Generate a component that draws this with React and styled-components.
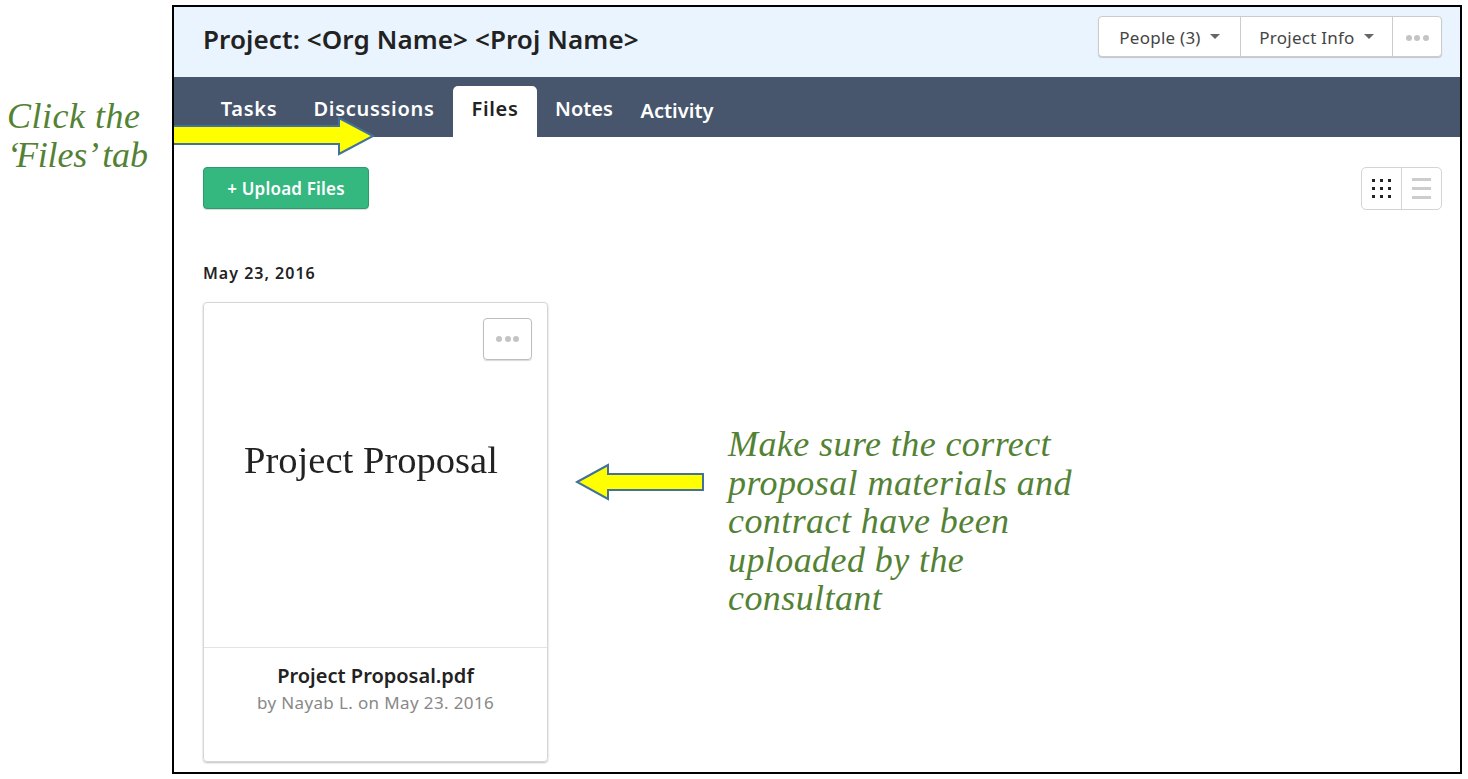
import React from 'react'
import styled, { createGlobalStyle } from 'styled-components'

const Global = createGlobalStyle`
    html, body {
        margin: 0;
        background: #fff;
        overflow: hidden;
    }
    body {
        font-family: "Noto Sans", "Open Sans", sans-serif;
        color: #222;
    }
`

const Page = styled.div`
    display: flex;
    height: 779px;
    padding-top: 5px;
    box-sizing: border-box;
`

const Gutter = styled.aside`
    width: 172px;
    flex: none;
    padding: 92px 0 0 7px;
    box-sizing: border-box;
`

const Note = styled.p`
    margin: 0;
    font-family: "Liberation Serif", serif;
    font-style: italic;
    font-size: 36px;
    line-height: 38.5px;
    letter-spacing: 0.5px;
    color: #548235;
`

const NoteLine = styled.span`
    letter-spacing: -0.2px;
`

const TightQuote = styled.span`
    letter-spacing: ${p => p.$ls}px;
`

const Frame = styled.main`
    position: relative;
    width: 1290px;
    height: 769px;
    box-sizing: border-box;
    border: 2px solid #000;
    overflow: hidden;
`

const Header = styled.header`
    height: 70px;
    background: #e9f4ff;
    display: flex;
    align-items: flex-start;
    justify-content: space-between;
    padding: 9px 18px 0 29px;
    box-sizing: border-box;
`

const Title = styled.h1`
    margin: 0;
    font-size: 26px;
    line-height: 46px;
    font-weight: 600;
    letter-spacing: 0.1px;
    color: #222;
`

const BtnGroup = styled.div`
    display: flex;
    height: 41px;
    box-sizing: border-box;
    background: #fff;
    border: 1px solid #ccc;
    border-radius: 4px;
    box-shadow: 0 1px 1px rgba(0, 0, 0, 0.18);
`

const GroupBtn = styled.div`
    width: ${p => p.$w}px;
    display: flex;
    align-items: center;
    justify-content: center;
    gap: 9px;
    padding-top: 2px;
    font-size: 17px;
    color: #444;
    letter-spacing: 0.25px;
    box-sizing: border-box;
    border-right: ${p => (p.$last ? 'none' : '1px solid #ccc')};
`

const Caret = styled.span`
    width: 0;
    height: 0;
    margin-bottom: 2px;
    border-left: 5px solid transparent;
    border-right: 5px solid transparent;
    border-top: 5px solid #666;
`

const Dots = styled.span`
    display: flex;
    gap: 2.5px;
    i {
        width: 6px;
        height: 6px;
        border-radius: 50%;
        background: #c4c4c4;
    }
`

const Nav = styled.nav`
    height: 60px;
    background: #47566c;
    display: flex;
    align-items: flex-end;
    padding-left: 29px;
`

const Tab = styled.div`
    height: ${p => (p.$active ? 51 : 60)}px;
    width: ${p => p.$w}px;
    display: flex;
    justify-content: center;
    align-items: flex-start;
    box-sizing: border-box;
    padding-top: ${p => p.$top}px;
    font-size: 20px;
    line-height: 28px;
    font-weight: 600;
    letter-spacing: ${p => p.$ls || 0}px;
    color: ${p => (p.$active ? '#222' : '#fff')};
    background: ${p => (p.$active ? '#fff' : 'transparent')};
    border-radius: ${p => (p.$active ? '5px 5px 0 0' : '0')};
`

const Content = styled.section`
    padding: 30px 18px 0 29px;
`

const Toolbar = styled.div`
    display: flex;
    justify-content: space-between;
    align-items: flex-start;
`

const UploadBtn = styled.button`
    width: 166px;
    height: 42px;
    padding: 0;
    background: #35b87f;
    border: 1px solid #2a9c6b;
    border-radius: 4px;
    box-shadow: 0 1px 1px rgba(0, 0, 0, 0.15);
    color: #fff;
    font-family: inherit;
    font-size: 17px;
    font-weight: 600;
    letter-spacing: 0.2px;
`

const ViewToggle = styled.div`
    display: flex;
    width: 81px;
    height: 43px;
    box-sizing: border-box;
    border: 1px solid #d4d4d4;
    border-radius: 5px;
`

const ViewBtn = styled.div`
    flex: ${p => (p.$grow ? 1 : 'none')};
    width: ${p => (p.$grow ? 'auto' : '40px')};
    display: flex;
    align-items: center;
    justify-content: center;
    box-sizing: border-box;
    border-right: ${p => (p.$divider ? '1px solid #d4d4d4' : 'none')};
`

const DateLabel = styled.h2`
    margin: 52px 0 18px;
    font-size: 16px;
    line-height: 22px;
    font-weight: 600;
    letter-spacing: 1px;
    color: #222;
`

const FileRow = styled.div`
    display: flex;
    align-items: flex-start;
`

const Card = styled.article`
    position: relative;
    width: 345px;
    height: 460px;
    flex: none;
    box-sizing: border-box;
    border: 1px solid #d6d6d6;
    border-radius: 4px;
    box-shadow: 0 1px 2px rgba(0, 0, 0, 0.25);
    display: flex;
    flex-direction: column;
`

const KebabBtn = styled.div`
    position: absolute;
    top: 15px;
    right: 15px;
    width: 49px;
    height: 42px;
    box-sizing: border-box;
    border: 1px solid #bdbdbd;
    border-radius: 4px;
    box-shadow: 0 1px 1px rgba(0, 0, 0, 0.15);
    display: flex;
    align-items: center;
    justify-content: center;
`

const Preview = styled.div`
    height: 345px;
    box-sizing: border-box;
    padding: 0 9px 30px 0;
    display: flex;
    align-items: center;
    justify-content: center;
    border-bottom: 1px solid #e4e4e4;
`

const PreviewTitle = styled.span`
    font-family: "Liberation Serif", serif;
    font-size: 38.6px;
    color: #222;
    filter: blur(0.4px);
`

const CardFooter = styled.div`
    padding-top: 14px;
    text-align: center;
`

const FileName = styled.div`
    font-size: 20px;
    line-height: 27px;
    font-weight: 600;
    color: #222;
`

const FileMeta = styled.div`
    font-size: 17px;
    line-height: 28px;
    letter-spacing: 0.37px;
    color: #888;
`

const OverArrow = styled.svg`
    position: absolute;
    left: -2px;
    top: 110px;
`

const BackArrow = styled.svg`
    flex: none;
    margin: 161px 0 0 27px;
`

const SideNote = styled(Note)`
    width: 360px;
    margin: 123px 0 0 23px;
    letter-spacing: 0.42px;
`

function GridIcon() {
    const pos = [0, 8, 16]
    return (
        <svg width="19" height="19" viewBox="0 0 19 19">
            {pos.map(y => pos.map(x => (
                <rect key={`${x}-${y}`} x={x} y={y} width="3" height="3" fill="#222" />
            )))}
        </svg>
    )
}

function ListIcon() {
    return (
        <svg width="19" height="21" viewBox="0 0 19 21">
            <rect y="0" width="19" height="3" fill="#ccc" />
            <rect y="9" width="19" height="3" fill="#ccc" />
            <rect y="18" width="19" height="3" fill="#ccc" />
        </svg>
    )
}

function ThreeDots() {
    return <Dots><i /><i /><i /></Dots>
}

export default function App() {
    return (
        <Page>
            <Global />
            <Gutter>
                <Note>
                    Click the<br />
                    <NoteLine><TightQuote $ls={-3}>‘</TightQuote>Files<TightQuote $ls={-5.5}>’</TightQuote> tab</NoteLine>
                </Note>
            </Gutter>
            <Frame>
                <Header>
                    <Title>Project: &lt;Org Name&gt; &lt;Proj Name&gt;</Title>
                    <BtnGroup>
                        <GroupBtn $w={142}>People (3) <Caret /></GroupBtn>
                        <GroupBtn $w={152}>Project Info <Caret /></GroupBtn>
                        <GroupBtn $w={48} $last><ThreeDots /></GroupBtn>
                    </BtnGroup>
                </Header>
                <Nav>
                    <Tab $w={92} $top={18} $ls={0.7}>Tasks</Tab>
                    <Tab $w={158} $top={18} $ls={0.7}>Discussions</Tab>
                    <Tab $w={84} $top={9} $ls={0.7} $active>Files</Tab>
                    <Tab $w={94} $top={18}>Notes</Tab>
                    <Tab $w={92} $top={20}>Activity</Tab>
                </Nav>
                <Content>
                    <Toolbar>
                        <UploadBtn>+ Upload Files</UploadBtn>
                        <ViewToggle>
                            <ViewBtn $divider><GridIcon /></ViewBtn>
                            <ViewBtn $grow><ListIcon /></ViewBtn>
                        </ViewToggle>
                    </Toolbar>
                    <DateLabel>May 23, 2016</DateLabel>
                    <FileRow>
                        <Card>
                            <KebabBtn><ThreeDots /></KebabBtn>
                            <Preview><PreviewTitle>Project Proposal</PreviewTitle></Preview>
                            <CardFooter>
                                <FileName>Project Proposal.pdf</FileName>
                                <FileMeta>by Nayab L. on May 23. 2016</FileMeta>
                            </CardFooter>
                        </Card>
                        <BackArrow width="130" height="38" viewBox="0 0 130 38">
                            <polygon points="2,19 33,2 33,11 128,11 128,27 33,27 33,36" fill="#ffff00" stroke="#41719c" strokeWidth="2" />
                        </BackArrow>
                        <SideNote>Make sure the correct proposal materials and contract have been uploaded by the consultant</SideNote>
                    </FileRow>
                </Content>
                <OverArrow width="204" height="40" viewBox="0 0 204 40">
                    <polygon points="0,9 167,9 167,1 201,19 167,37 167,27 0,27" fill="#ffff00" stroke="#41719c" strokeWidth="2" />
                </OverArrow>
            </Frame>
        </Page>
    )
}
